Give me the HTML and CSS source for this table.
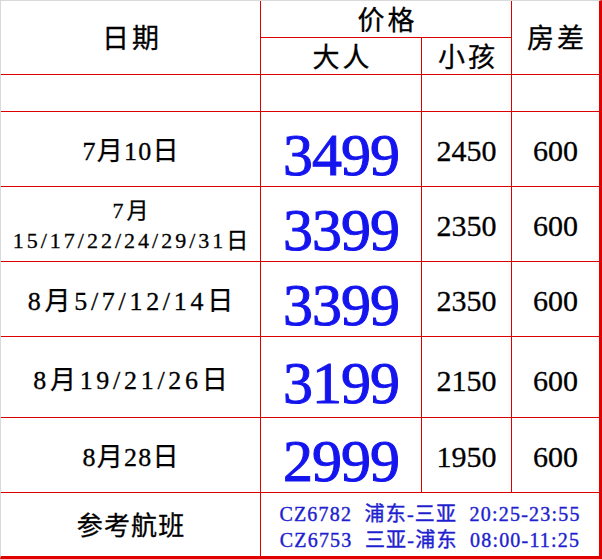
FILE: index.html
```html
<!DOCTYPE html>
<html>
<head>
<meta charset="utf-8">
<title>价格表</title>
<link rel="stylesheet" href="styles.css">
</head>
<body>
<div class="sheet">
  <div class="cell head date-head span-r2"><span>日期</span></div>
  <div class="cell head price-head span-c2"><span>价格</span></div>
  <div class="cell head room-head span-r2 last-col"><span>房差</span></div>
  <div class="cell head sub"><span>大人</span></div>
  <div class="cell head sub"><span>小孩</span></div>

  <div class="cell"></div>
  <div class="cell"></div>
  <div class="cell"></div>
  <div class="cell last-col"></div>

  <div class="cell date ls1"><span>7月10日</span></div>
  <div class="cell big"><span>3499</span></div>
  <div class="cell num"><span>2450</span></div>
  <div class="cell num last-col"><span>600</span></div>

  <div class="cell date small"><span>7月<br>15/17/22/24/29/31日</span></div>
  <div class="cell big"><span>3399</span></div>
  <div class="cell num"><span>2350</span></div>
  <div class="cell num last-col"><span>600</span></div>

  <div class="cell date ls4"><span>8月5/7/12/14日</span></div>
  <div class="cell big"><span>3399</span></div>
  <div class="cell num"><span>2350</span></div>
  <div class="cell num last-col"><span>600</span></div>

  <div class="cell date ls4 tall"><span>8月19/21/26日</span></div>
  <div class="cell big tall"><span>3199</span></div>
  <div class="cell num tall"><span>2150</span></div>
  <div class="cell num tall last-col"><span>600</span></div>

  <div class="cell date ls1"><span>8月28日</span></div>
  <div class="cell big"><span>2999</span></div>
  <div class="cell num"><span>1950</span></div>
  <div class="cell num last-col"><span>600</span></div>

  <div class="cell date ls1 last-row"><span>参考航班</span></div>
  <div class="cell flights span-c3 last-row last-col">
    <span>CZ6782  浦东-三亚  20:25-23:55<br>CZ6753  三亚-浦东  08:00-11:25</span>
  </div>
</div>
</body>
</html>
```

FILE: styles.css
```css
html, body {
  margin: 0;
  padding: 0;
  background: #ffffff;
}

.sheet {
  display: grid;
  grid-template-columns: 260px 161px 90px 87px;
  grid-template-rows: 37px 37px 37px 75px 75px 75px 81px 75px 63px;
  border-top: 1px solid #d9d9d9;
  border-left: 1px solid #d9d9d9;
  border-right: 3px solid #e00000;
  border-bottom: 3px solid #e00000;
  width: 598px;
  font-family: "Liberation Serif", "Times New Roman", "DejaVu Serif", "Noto Sans CJK SC", serif;
  color: #000;
}

.cell {
  box-sizing: border-box;
  border-right: 1px solid #dd0000;
  border-bottom: 1px solid #dd0000;
  display: flex;
  align-items: center;
  justify-content: center;
  text-align: center;
  white-space: nowrap;
  -webkit-text-stroke: 0.3px #000;
}

.last-col { border-right: none; }
.last-row { border-bottom: none; }

.span-r2 { grid-row: span 2; }
.span-c2 { grid-column: span 2; }
.span-c3 { grid-column: span 3; }

.head {
  font-size: 27px;
  letter-spacing: 3px;
  line-height: 1;
}
.head span { padding-left: 3px; }
.date-head, .room-head { padding-top: 4px; }
.price-head { padding-top: 4px; }
.sub { padding-top: 5px; }

.date {
  font-size: 26px;
  line-height: 30px;
  padding-top: 5px;
}
.ls1 { letter-spacing: 1.2px; }
.ls1 span { padding-left: 1.2px; }
.ls4 { letter-spacing: 3.7px; }
.ls4 span { padding-left: 3.7px; }
.small {
  font-size: 22px;
  line-height: 30px;
  letter-spacing: 3px;
  padding-top: 4px;
}
.small span { padding-left: 3px; }

.big {
  font-size: 60px;
  line-height: 1;
  letter-spacing: -1px;
  color: #1414ee;
  -webkit-text-stroke: 1px #1414ee;
  padding-top: 12px;
}
.tall.big { padding-top: 12px; }

.num {
  font-size: 30px;
  line-height: 1;
  padding-top: 4px;
}
.tall { padding-top: 8px; }

.flights {
  font-size: 20px;
  line-height: 26px;
  letter-spacing: 1.2px;
  color: #1f1fd0;
  -webkit-text-stroke: 0.4px #1f1fd0;
  white-space: pre;
  padding-top: 4px;
}
```
